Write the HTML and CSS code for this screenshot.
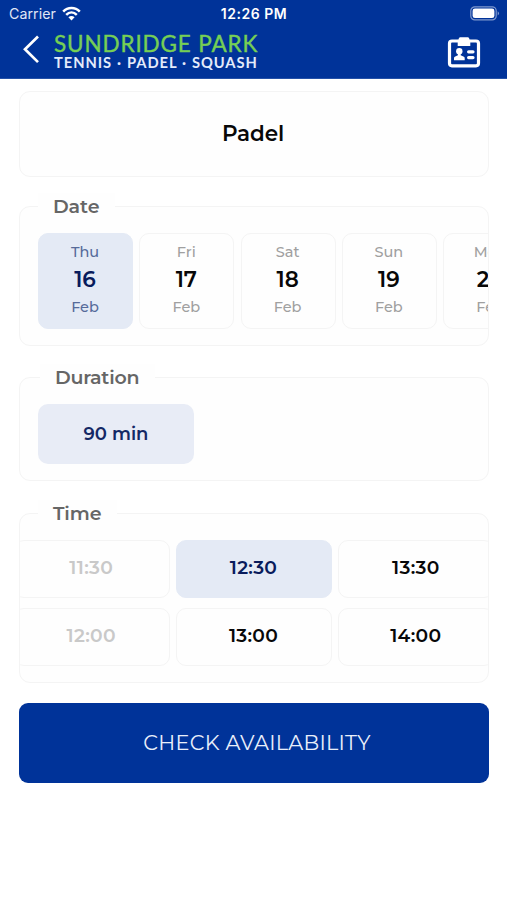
FILE: index.html
```html
<!DOCTYPE html>
<html lang="en">
<head>
<meta charset="utf-8">
<title>Sundridge Park</title>
<link rel="stylesheet" href="styles.css">
</head>
<body>
<header class="header">
  <div class="status">
    <div class="carrier"><span>Carrier</span>
      <svg width="19" height="15" viewBox="0 0 19 15"><g fill="none" stroke="#fff" stroke-width="2.5"><path d="M1.2 5.7C5.8.8 13.2.8 17.8 5.7"/><path d="M4.2 8.9C7.3 5.8 11.7 5.8 14.8 8.9"/></g><path d="M6.4 11.2Q9.5 8.8 12.6 11.2L9.5 14.4Z" fill="#fff"/></svg>
    </div>
    <div class="clock">12:26 PM</div>
    <svg class="battery" width="30" height="15" viewBox="0 0 30 15"><rect x=".8" y=".8" width="25.4" height="13.1" rx="4" fill="none" stroke="#7f99ce" stroke-width="1.2"/><rect x="2.6" y="2.6" width="21.8" height="9.5" rx="2.4" fill="#fff"/><path d="M27.7 5.2Q30.3 7.4 27.7 9.6Z" fill="#7f99ce"/></svg>
  </div>
  <div class="nav">
    <svg class="back" width="18" height="29" viewBox="0 0 18 29"><path d="M16 1.5 3 14.3 16 27.1" fill="none" stroke="#fff" stroke-width="2.7"/></svg>
    <div class="logo"><div class="club">SUNDRIDGE PARK</div><div class="sports">TENNIS · PADEL · SQUASH</div></div>
    <svg class="badge" width="34" height="32" viewBox="0 0 34 32"><rect x="2.5" y="5" width="29" height="24.8" rx="2.5" fill="none" stroke="#fff" stroke-width="3.2"/><path d="M13.2 1.2h7.6a1.5 1.5 0 0 1 1.5 1.5v1h1v6.2H10.7V3.7h1v-1a1.5 1.5 0 0 1 1.5-1.5Z" fill="#fff"/><circle cx="12.3" cy="15.2" r="3.2" fill="#fff"/><path d="M10.9 17h2.8v2.2l3.2 1.6q.8.5.8 1.4v2H7v-2q0-.9.8-1.4l3.1-1.6Z" fill="#fff"/><path d="M21.6 15.8h4.4M21.6 21.6h4.4" stroke="#fff" stroke-width="3.2" stroke-linecap="round"/></svg>
  </div>
</header>
<main>
  <section class="panel title">Padel</section>
  <section class="panel date">
    <h2>Date</h2>
    <div class="days">
      <div class="day selected"><span>Thu</span><b>16</b><span>Feb</span></div>
      <div class="day"><span>Fri</span><b>17</b><span>Feb</span></div>
      <div class="day"><span>Sat</span><b>18</b><span>Feb</span></div>
      <div class="day"><span>Sun</span><b>19</b><span>Feb</span></div>
      <div class="day"><span>Mon</span><b>20</b><span>Feb</span></div>
    </div>
  </section>
  <section class="panel duration">
    <h2>Duration</h2>
    <div class="length">90 min</div>
  </section>
  <section class="panel time">
    <h2>Time</h2>
    <div class="slots">
      <div class="slot off">11:30</div><div class="slot selected">12:30</div><div class="slot">13:30</div>
      <div class="slot off">12:00</div><div class="slot">13:00</div><div class="slot">14:00</div>
    </div>
  </section>
  <button class="check">CHECK AVAILABILITY</button>
</main>
</body>
</html>
```
FILE: styles.css
```css
* { box-sizing: border-box; }
body { margin: 0; height: 900px; overflow: hidden; background: #fff; font-family: Montserrat, Inter, sans-serif; color: #080808; }
svg { display: block; flex: none; }
.header { height: 79px; background: #003399; border-bottom: 1px solid #2451a8; color: #fff; }
.status { height: 28px; display: grid; grid-template-columns: 1fr auto 1fr; align-items: center; padding: 0 7px 0 9px; font-family: Inter, sans-serif; }
.carrier { display: flex; align-items: center; gap: 6px; font-size: 14.2px; letter-spacing: .05px; color: #e0e7f6; }
.carrier span { width: 47px; white-space: nowrap; margin-top: -1px; }
.carrier svg { margin-top: -2px; }
.clock { font-size: 14px; font-weight: 600; letter-spacing: .5px; margin: -1px 0 0 -1px; }
.battery { justify-self: end; margin-top: -2px; }
.nav { display: flex; padding-left: 22px; }
.back { margin-top: 7px; }
.logo { margin-left: 14px; padding-top: 3px; font-family: Lato, sans-serif; white-space: nowrap; }
.club { height: 23px; font-size: 22.5px; line-height: 26px; letter-spacing: .85px; color: #76cf55; font-weight: 400; -webkit-text-stroke: .4px #76cf55; }
.sports { height: 17px; font-size: 14.7px; line-height: 17px; font-weight: 700; letter-spacing: .96px; word-spacing: .4px; color: #e4ebfa; }
.badge { margin: 8px 26px 0 auto; }
main { display: flex; flex-direction: column; padding: 12px 18px 0 19px; }
.panel { border: 1.5px solid #f4f4f4; border-radius: 11px; background: #fefefe; }
.title { height: 86px; display: grid; place-items: center; font-size: 21.5px; font-weight: 600; padding: 0 2px 3px 0; letter-spacing: -.1px; }
h2 { position: relative; width: max-content; height: 26px; margin: -14px 0 0 18px; padding: 1px 16px 0 15px; background: #fefefe; font-size: 19px; line-height: 26px; font-weight: 600; color: #666; letter-spacing: -.1px; }
.date { height: 140px; margin-top: 29px; }
.days { display: flex; gap: 6.3px; padding: 14px 0 0 18px; overflow: hidden; }
.day { flex: 0 0 95px; height: 96px; border: 1.5px solid #f4f4f4; border-radius: 10px; display: flex; flex-direction: column; align-items: center; padding: 7px 1px 0 0; font-size: 14.5px; font-weight: 500; color: #a0a0a0; letter-spacing: 0; }
.day span { line-height: 22px; }
.day b { font-size: 21.5px; line-height: 33px; font-weight: 600; color: #080808; letter-spacing: 0; }
.day.selected { background: #e4eaf5; border-color: #e4eaf5; color: #566b9a; }
.day.selected b { color: #081b5c; }
.duration { height: 104px; margin-top: 31px; }
.duration h2 { margin-left: 20px; letter-spacing: -.25px; }
.length { width: 156px; height: 60px; margin: 14px 0 0 18px; border-radius: 10px; background: #e8ecf6; color: #142865; font-size: 18px; font-weight: 600; display: grid; place-items: center; letter-spacing: 0; padding-bottom: 1px; }
.time { height: 170px; margin-top: 32px; }
.slots { display: grid; grid-template-columns: repeat(3, 156px); justify-content: center; gap: 10px 6.3px; margin-top: 14px; overflow: hidden; }
.slot { height: 58px; border: 1.5px solid #f4f4f4; border-radius: 10px; display: grid; place-items: center; font-size: 18.7px; font-weight: 600; padding: 0 1px 3px 0; letter-spacing: .3px; }
.off { color: #c9c9c9; }
.slot.selected { background: #e4eaf5; border-color: #e4eaf5; color: #081b5c; }
.check { height: 80px; margin-top: 20px; border: 0; border-radius: 9px; background: #003399; color: #e9effb; font: 400 20.8px Montserrat, Inter, sans-serif; letter-spacing: .28px; padding: 0 0 2px 6px; }
```
